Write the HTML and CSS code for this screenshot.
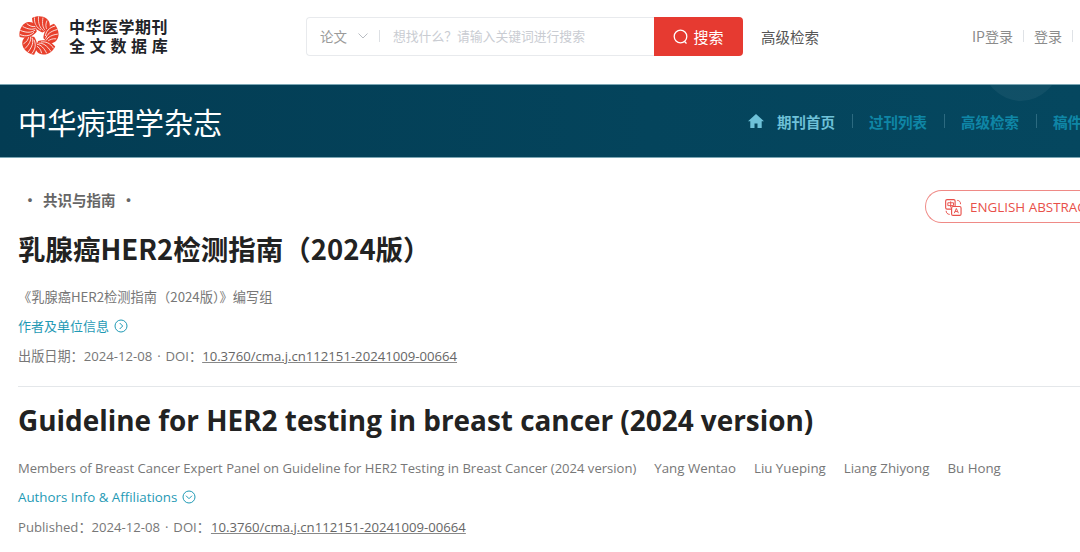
FILE: index.html
```html
<!DOCTYPE html>
<html lang="zh">
<head>
<meta charset="utf-8">
<title>乳腺癌HER2检测指南（2024版）</title>
<link rel="stylesheet" href="styles.css">
</head>
<body>
<div class="page">
  <header class="top">
    <div class="logo">
      <svg class="logo-mark" viewBox="-20 -20 40 40" width="40" height="40" aria-hidden="true">
        <defs>
          <g id="petal">
            <path d="M3.500 -3.500C-1 -5 -6.500 -9 -7 -18C-3 -20.500 4 -20.500 7.500 -17.500C11.500 -14.500 11.500 -9.500 9.500 -6.500C7 -5 5 -4.500 3.500 -3.500Z" fill="#e8402c"/>
            <path d="M2 -6C-2 -8 -5 -12 -4.500 -18.500M4.500 -5.500C1 -8 -1 -12 -.5 -19.500M6.500 -5.500C3.500 -8 3 -13 4 -18.500M8 -6.500C6.500 -9 6.500 -12 8 -15.500" fill="none" stroke="#fff" stroke-width=".75"/>
          </g>
        </defs>
        <use href="#petal"/>
        <use href="#petal" transform="rotate(72)"/>
        <use href="#petal" transform="rotate(144)"/>
        <use href="#petal" transform="rotate(216)"/>
        <use href="#petal" transform="rotate(288)"/>
      </svg>
      <div class="logo-text">
        <div class="logo-l1">中华医学期刊</div>
        <div class="logo-l2">全文数据库</div>
      </div>
    </div>
    <div class="search">
      <div class="search-box">
        <span class="search-type">论文</span>
        <svg class="chev" viewBox="0 0 10 6" width="10" height="6" aria-hidden="true"><path d="M.5 .5l4.500 4.500 4.500-4.500" fill="none" stroke="#b9bdc3" stroke-width="1"/></svg>
        <span class="search-sep"></span>
        <span class="search-ph">想找什么？请输入关键词进行搜索</span>
      </div>
      <div class="search-btn">
        <svg viewBox="0 0 16 16" width="16" height="16" aria-hidden="true"><circle cx="7.500" cy="7.500" r="6.300" fill="none" stroke="#fff" stroke-width="1.300"/><path d="M11.500 12.500l2 2" stroke="#fff" stroke-width="1.300"/></svg>
        <span>搜索</span>
      </div>
    </div>
    <a class="adv">高级检索</a>
    <div class="login">
      <span>IP登录</span><i></i><span>登录</span><i></i><span>注册</span>
    </div>
  </header>

  <section class="banner">
    <div class="glow"></div>
    <h2 class="journal">中华病理学杂志</h2>
    <nav class="nav">
      <svg class="home" viewBox="0 0 16 14" width="16" height="14" aria-hidden="true"><path d="M8 0L0 7.200h2.300V14h4.200V9.500h3V14h4.200V7.200H16z" fill="#6ec1d8"/></svg>
      <a class="nav-item first">期刊首页</a><i></i>
      <a class="nav-item">过刊列表</a><i></i>
      <a class="nav-item">高级检索</a><i></i>
      <a class="nav-item">稿件跟踪</a>
    </nav>
  </section>

  <main class="content">
    <div class="meta-row">
      <div class="column"><span>·</span><b>共识与指南</b><span>·</span></div>
      <a class="en-btn">
        <svg viewBox="0 0 18 18" width="17" height="17" aria-hidden="true">
          <rect x=".7" y=".7" width="10" height="10" rx="1.500" fill="none" stroke="#e8504a" stroke-width="1.200"/>
          <path d="M3 4h6v3H3zM6 2.500v6.500" fill="none" stroke="#e8504a" stroke-width="1"/>
          <rect x="7" y="8" width="10" height="9.300" rx="1.500" fill="#fff" stroke="#e8504a" stroke-width="1.200"/>
          <path d="M9.800 15l2.200-5 2.200 5M10.600 13.300h2.800" fill="none" stroke="#e8504a" stroke-width="1"/>
          <path d="M13 1.500c2 0 3.500 1.300 3.500 4M1.200 12.500c0 2 1.300 3.800 3.800 3.800" fill="none" stroke="#e8504a" stroke-width="1"/>
        </svg>
        <span>ENGLISH ABSTRACT</span>
      </a>
    </div>
    <h1 class="title-cn">乳腺癌HER2检测指南（2024版）</h1>
    <p class="authors cn-a">《乳腺癌HER2检测指南（2024版）》编写组</p>
    <a class="info cn-i">作者及单位信息
      <svg viewBox="0 0 14 14" width="14" height="14" aria-hidden="true"><circle cx="7" cy="7" r="6" fill="none" stroke="#1f9ab5" stroke-width="1"/><path d="M5.700 4l3 3-3 3" fill="none" stroke="#1f9ab5" stroke-width="1"/></svg>
    </a>
    <p class="pub cn-p">出版日期：2024-12-08 · DOI：<u>10.3760/cma.j.cn112151-20241009-00664</u></p>
    <hr class="rule">
    <h1 class="title-en">Guideline for HER2 testing in breast cancer (2024 version)</h1>
    <p class="authors en-a"><span class="panel">Members of Breast Cancer Expert Panel on Guideline for HER2 Testing in Breast Cancer (2024 version)</span><span>Yang Wentao</span><span>Liu Yueping</span><span>Liang Zhiyong</span><span>Bu Hong</span></p>
    <a class="info en-i">Authors Info &amp; Affiliations
      <svg viewBox="0 0 14 14" width="14" height="14" aria-hidden="true"><circle cx="7" cy="7" r="6" fill="none" stroke="#1f9ab5" stroke-width="1"/><path d="M4 5.700l3 3 3-3" fill="none" stroke="#1f9ab5" stroke-width="1"/></svg>
    </a>
    <p class="pub en-p">Published：2024-12-08 · DOI：<u>10.3760/cma.j.cn112151-20241009-00664</u></p>
  </main>
</div>
</body>
</html>
```

FILE: styles.css
```css
* { box-sizing: border-box; }
html, body { margin: 0; padding: 0; height: 100%; overflow: hidden; background: #fff; }
body { font-family: "Open Sans", "Noto Sans CJK SC", sans-serif; color: #666; }
.page { width: 1080px; height: 552px; overflow: hidden; }
a { text-decoration: none; }
i { font-style: normal; }

.top { height: 84px; display: flex; align-items: flex-start; white-space: nowrap; }
.logo { display: flex; align-items: center; margin: 16px 0 0 19px; width: 287px; }
.logo-mark { display: block; }
.logo-text { margin-left: 10px; font-family: "Noto Sans CJK SC", sans-serif; font-weight: 700; color: #1f2328; font-size: 16px; line-height: 19.500px; }
.logo-l1 { width: 100px; letter-spacing: .5px; }
.logo-l2 { letter-spacing: 4.700px; width: 100px; }

.search { display: flex; width: 437px; height: 39px; margin-top: 17px; }
.search-box { flex: 1; display: flex; align-items: center; border: 1px solid #e8eaed; border-right: 0; border-radius: 4px 0 0 4px; padding: 0 0 2px 13px; font-family: "Noto Sans CJK SC", sans-serif; font-size: 13.500px; }
.search-type { color: #9a9a9a; }
.chev { margin-left: 11px; flex: none; }
.search-sep { width: 1px; height: 12px; background: #dde0e4; margin: 0 13px 0 11px; flex: none; }
.search-ph { color: #c9ccd2; font-size: 12.800px; }
.search-btn { width: 89px; background: #e63a31; color: #fff; border-radius: 0 4px 4px 0; display: flex; align-items: center; justify-content: center; gap: 4px; font-family: "Noto Sans CJK SC", sans-serif; font-size: 15px; }
.adv { margin: 27px 0 0 18px; font-family: "Noto Sans CJK SC", sans-serif; font-size: 14.500px; line-height: 20px; color: #555; }
.login { margin: 26px 0 0 auto; width: 108px; flex: none; display: flex; align-items: center; font-size: 14px; line-height: 20px; color: #8b8b8b; font-family: "Noto Sans CJK SC", sans-serif; }
.login i { width: 1px; height: 12px; background: #dfe2e6; margin: 0 10px; flex: none; }

.banner { height: 74px; position: relative; display: flex; align-items: center; overflow: hidden; background: linear-gradient(90deg, #033c53, #04445c 60%, #05475f); border-top: 1px solid #7ba6b4; border-bottom: 1px solid #7ba6b4; }
.glow { position: absolute; left: 983px; top: -60px; width: 76px; height: 76px; border-radius: 50%; background: rgba(255,255,255,.05); }
.journal { margin: 0 0 0 18px; width: 730px; flex: none; font-family: "Noto Sans CJK SC", sans-serif; font-weight: 400; font-size: 29.200px; line-height: 40px; color: #fff; }
.nav { display: flex; align-items: center; white-space: nowrap; font-family: "Noto Sans CJK SC", sans-serif; font-weight: 700; font-size: 14.500px; }
.nav i { width: 1px; height: 14px; background: #2c6a80; margin: 0 16.500px; flex: none; }
.home { margin-right: 13px; flex: none; }
.nav-item { color: #0f86a6; }
.nav-item.first { color: #6ec1d8; }

.content { padding: 0 0 0 18px; font-family: "Noto Sans CJK SC", "Open Sans", sans-serif; }
.meta-row { display: flex; justify-content: space-between; align-items: flex-start; height: 70px; padding-top: 32px; white-space: nowrap; }
.column { display: flex; gap: 5px; font-size: 14.500px; line-height: 20px; color: #666; padding-left: 4px; }
.column span { width: 16px; text-align: center; font-weight: 700; }
.column b { font-weight: 700; }
.en-btn { display: flex; align-items: center; gap: 8px; width: 200px; height: 33px; flex: none; border: 1px solid #ef8a86; border-right: 0; border-radius: 17px 0 0 17px; padding: 1px 0 0 19px; margin: 0 -45px 0 0; color: #e8504a; font-family: "Open Sans", sans-serif; font-size: 13.400px; }
.title-cn { margin: 0; font-family: "Noto Sans CJK SC", sans-serif; font-size: 27.500px; line-height: 40px; font-weight: 700; color: #222; white-space: nowrap; }
.authors { margin: 0; font-size: 13.240px; line-height: 20px; color: #777; white-space: nowrap; }
.info { display: flex; align-items: center; gap: 5px; font-size: 13px; line-height: 20px; color: #1f9ab5; white-space: nowrap; }
.pub { margin: 0; font-family: "Open Sans", "Noto Sans CJK SC", sans-serif; font-size: 13.150px; word-spacing: 1.500px; line-height: 20px; color: #777; white-space: nowrap; }
.pub u { text-decoration-color: #888; color: #666; }
.cn-a { margin-top: 19px; }
.cn-i { margin-top: 9px; }
.cn-p { margin-top: 10px; }
.rule { margin: 20px 0 0; border: 0; border-top: 1px solid #e4e7ea; }
.title-en { margin: 11px 0 0; font-family: "Open Sans", sans-serif; font-size: 27.900px; line-height: 44px; font-weight: 700; color: #222; white-space: nowrap; }
.en-a { margin-top: 16px; font-family: "Open Sans", sans-serif; font-size: 13.300px; display: flex; gap: 18px; }
.en-a .panel { font-size: 13.060px; }
.en-i { margin-top: 9px; font-family: "Open Sans", sans-serif; font-size: 13.330px; }
.en-p { margin-top: 10px; }
.en-p u { margin-left: 1px; }
```
